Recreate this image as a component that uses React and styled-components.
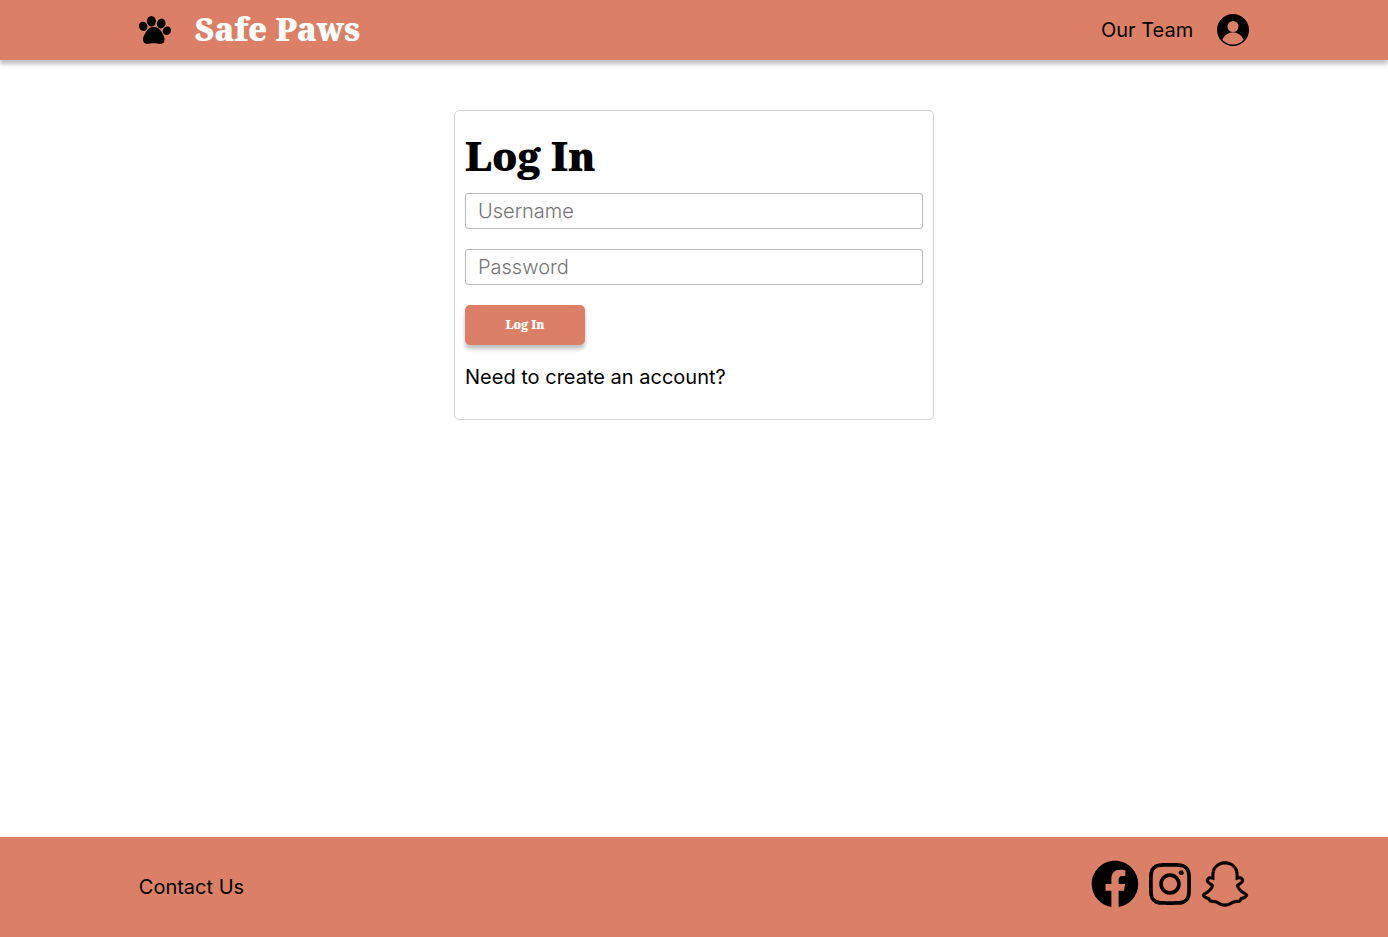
import React from "react";
import styled, { createGlobalStyle, ThemeProvider } from "styled-components";
import { FaFacebook, FaInstagram } from "react-icons/fa";
import { FaSnapchat } from "react-icons/fa6";

const theme = {
  coral: "#db8067",
  shadow: "0 4px 4px rgba(0, 0, 0, 0.25)",
  display: '"Noto Serif", "DejaVu Serif Condensed", "Liberation Serif", serif',
  body: 'Inter, "Open Sans", sans-serif',
};

const GlobalStyle = createGlobalStyle`
  *, *::before, *::after { box-sizing: border-box; }
  body {
    margin: 0;
    background: #fff;
    color: #000;
    font-family: ${({ theme }) => theme.body};
    font-size: 20px;
    font-weight: 400;
    line-height: 24px;
  }
`;

const Page = styled.div`
  display: flex;
  flex-direction: column;
  min-height: 100vh;
`;

const Header = styled.header`
  display: flex;
  align-items: center;
  justify-content: space-between;
  height: 60px;
  padding: 0 10%;
  background: ${({ theme }) => theme.coral};
  box-shadow: ${({ theme }) => theme.shadow};
`;

const Group = styled.div`
  display: flex;
  align-items: center;
  gap: 24px;
`;

const SocialLinks = styled.div`
  display: flex;
  gap: 7px;
  padding-bottom: 6px;
`;

const Brand = styled.h1`
  margin: 0;
  padding-bottom: 2px;
  color: #fff;
  font-family: ${({ theme }) => theme.display};
  font-size: 32px;
  font-weight: 900;
  line-height: 40px;
`;

const TextLink = styled.a`
  color: inherit;
  text-decoration: none;
`;

const IconLink = styled.a`
  display: flex;
  color: inherit;
`;

const SnapchatIcon = styled(FaSnapchat)`
  stroke: currentColor;
  stroke-width: 6px;
`;

const Main = styled.main`
  flex: 1;
  padding: 50px 20px;
`;

const Card = styled.form`
  display: flex;
  flex-direction: column;
  align-items: flex-start;
  gap: 20px;
  max-width: 480px;
  margin: 0 auto;
  padding: 20px 10px 30px;
  border: 1px solid #d3d3d3;
  border-radius: 5px;
`;

const Title = styled.h2`
  margin: 0 0 -8px;
  font-family: ${({ theme }) => theme.display};
  font-size: 40px;
  font-weight: 900;
  line-height: 50px;
`;

const Field = styled.input`
  width: 100%;
  height: 36px;
  padding: 0 12px;
  border: 1px solid #b8b8b8;
  border-radius: 3px;
  background: #fff;
  font: inherit;
  font-weight: 300;

  &::placeholder {
    color: #757575;
    opacity: 1;
  }
`;

const SubmitButton = styled.button`
  width: 120px;
  height: 40px;
  padding: 0 0 2px;
  border: 0;
  border-radius: 5px;
  background: ${({ theme }) => theme.coral};
  box-shadow: ${({ theme }) => theme.shadow};
  color: #fff;
  font-family: ${({ theme }) => theme.display};
  font-size: 12px;
  font-weight: 900;
  cursor: pointer;
`;

const Footer = styled.footer`
  display: flex;
  align-items: center;
  justify-content: space-between;
  height: 100px;
  padding: 0 10%;
  background: ${({ theme }) => theme.coral};
`;

function PawIcon() {
  return (
    <svg width="32" height="32" viewBox="0 0 32 32" fill="currentColor" aria-hidden="true">
      <ellipse cx="4.2" cy="12.4" rx="4.1" ry="4.800" transform="rotate(-25 4.200 12.400)" />
      <ellipse cx="12.400" cy="7.200" rx="4.500" ry="5.300" />
      <ellipse cx="22.200" cy="9.500" rx="4.300" ry="5" transform="rotate(20 22.200 9.500)" />
      <ellipse cx="27.900" cy="16.700" rx="4" ry="4.400" transform="rotate(35 27.900 16.700)" />
      <path d="M14.800 13.100c3.700 0 6.100 1.800 7.500 4.500 1.300 2.500 3.300 4.700 3.300 8 0 2.600-1.600 4.400-4 4.400-2.400 0-4.300-.7-6.800-.7s-4.400.7-6.800.7C5.600 30 4 28.200 4 25.600c0-3.100 1.800-5.400 3.300-8 1.500-2.700 3.800-4.500 7.500-4.500Z" />
    </svg>
  );
}

function ProfileIcon() {
  return (
    <svg width="32" height="32" viewBox="0 0 32 32" aria-hidden="true">
      <path
        fill="currentColor"
        fillRule="evenodd"
        d="M16 0a16 16 0 1 0 0 32 16 16 0 0 0 0-32ZM16 7a5.500 5.500 0 1 1 0 11 5.500 5.500 0 0 1 0-11ZM5.300 25.700C7.700 21 11.500 18.200 16 18.200s8.300 2.800 10.700 7.500a14.400 14.400 0 0 1-21.400 0Z"
      />
    </svg>
  );
}

export default function App() {
  return (
    <ThemeProvider theme={theme}>
      <GlobalStyle />
      <Page>
        <Header>
          <Group>
            <IconLink href="#home" aria-label="Home">
              <PawIcon />
            </IconLink>
            <Brand>Safe Paws</Brand>
          </Group>
          <Group as="nav">
            <TextLink href="#team">Our Team</TextLink>
            <IconLink href="#profile" aria-label="Profile">
              <ProfileIcon />
            </IconLink>
          </Group>
        </Header>
        <Main>
          <Card>
            <Title>Log In</Title>
            <Field type="text" name="username" placeholder="Username" aria-label="Username" />
            <Field type="password" name="password" placeholder="Password" aria-label="Password" />
            <SubmitButton type="submit">Log In</SubmitButton>
            <TextLink href="#signup">Need to create an account?</TextLink>
          </Card>
        </Main>
        <Footer>
          <TextLink href="#contact">Contact Us</TextLink>
          <SocialLinks>
            <IconLink href="#facebook" aria-label="Facebook">
              <FaFacebook size={48} />
            </IconLink>
            <IconLink href="#instagram" aria-label="Instagram">
              <FaInstagram size={48} />
            </IconLink>
            <IconLink href="#snapchat" aria-label="Snapchat">
              <SnapchatIcon size={48} />
            </IconLink>
          </SocialLinks>
        </Footer>
      </Page>
    </ThemeProvider>
  );
}
